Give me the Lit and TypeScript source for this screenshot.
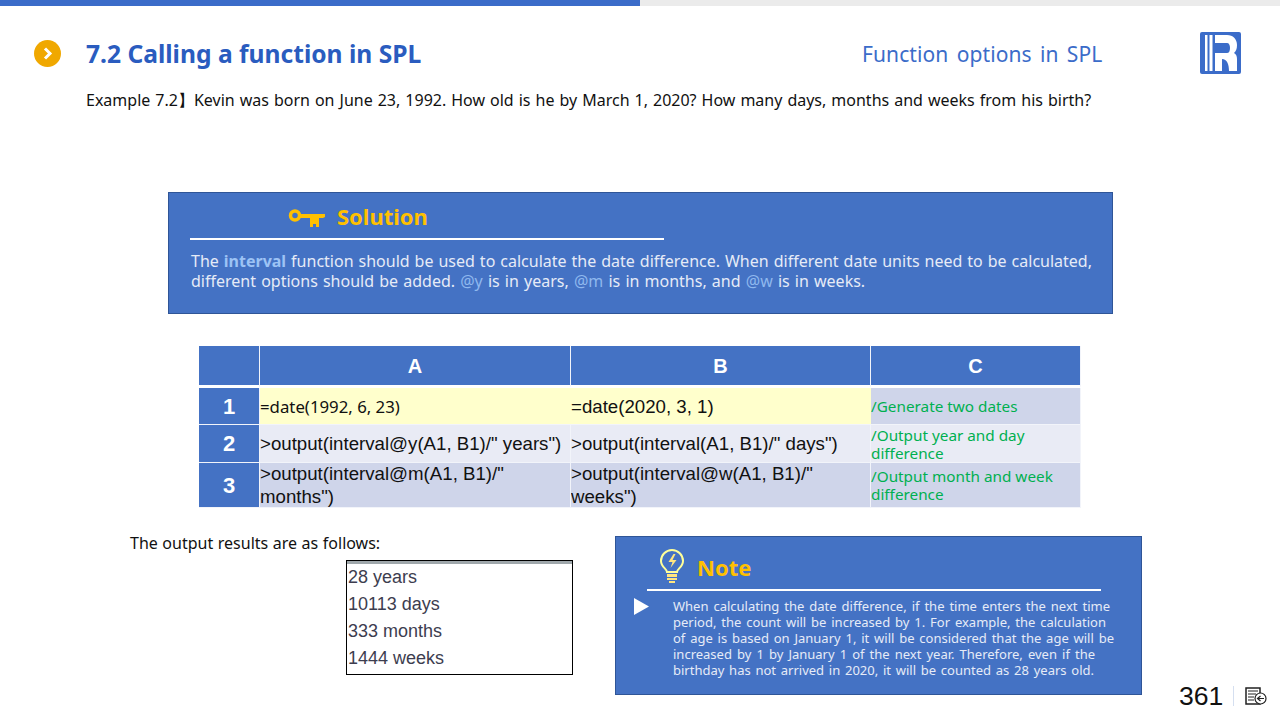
import { LitElement, html, css } from "lit";
import { customElement } from "lit/decorators.js";

const noteLines: [string, number][] = [
  ["When calculating the date difference, if the time enters the next time", 437],
  ["period, the count will be increased by 1. For example, the calculation", 433],
  ["of age is based on January 1, it will be considered that the age will be", 441],
  ["increased by 1 by January 1 of the next year. Therefore, even if the", 422],
  ["birthday has not arrived in 2020, it will be counted as 28 years old.", 421],
];

@customElement("app-root")
export class AppRoot extends LitElement {
  static styles = css`
    :host { display: block; width: 1280px; height: 720px; overflow: hidden; background: #fff; font-family: "Noto Sans", sans-serif; color: #111; }
    .progress { display: flex; height: 6px; background: #ebebeb; }
    .progress div { width: 640px; background: #3b6cc9; }
    .head { display: flex; align-items: center; height: 42px; margin-top: 26px; padding-left: 34px; }
    .bullet { width: 27px; height: 27px; flex: none; }
    .title { margin-left: 25px; width: 776px; font-size: 24.6px; font-weight: 700; color: #2a5cbf; white-space: nowrap; }
    .sub { width: 338px; font-size: 21px; color: #3b6cc9; white-space: nowrap; letter-spacing: 0.1px; word-spacing: 2.7px; padding-top: 1px; }
    .logo { width: 41px; height: 42px; flex: none; }
    .example { margin: 15px 0 0 86px; font-size: 16px; line-height: 22px; white-space: nowrap; word-spacing: 0.86px; }
    .solution { box-sizing: border-box; width: 945px; height: 122px; margin: 81px 0 0 168px; padding: 6px 20px 0 22px; background: #4472c4; border: 1px solid #2f5597; color: #e6ebf7; }
    .sol-head { display: flex; align-items: center; gap: 11px; height: 34px; padding-left: 97px; }
    .sol-head svg { width: 38px; height: 18px; margin-top: 3px; }
    .gold { font-size: 22px; font-weight: 700; color: #ffc000; }
    .rule { height: 2px; background: #fff; width: 474px; margin: 5px 0 11px -1px; }
    .sol-text { font-size: 16px; line-height: 20px; word-spacing: 1px; }
    .jl { text-align: justify; text-align-last: justify; white-space: nowrap; }
    .first { word-spacing: 0.7px; }
    .kw { font-weight: 700; color: #9dc3f5; }
    .opt { color: #8fb8ee; }
    .sheet { display: grid; grid-template-columns: 61px 311px 300px 210px; grid-template-rows: 42px 37px 38px 45px; width: 882px; margin: 32px 0 0 199px; }
    .cell { box-sizing: border-box; display: flex; align-items: center; border-right: 1px solid #f2f4fa; border-bottom: 1px solid #f2f4fa; font-family: "Liberation Sans", Arial, sans-serif; font-size: 18.67px; line-height: 23px; overflow: hidden; }
    .hd { background: #4472c4; color: #fff; font-weight: 700; font-size: 20px; justify-content: center; padding-top: 1px; border-bottom-width: 3px; border-bottom-color: #fff; }
    .sd { background: #4472c4; color: #fff; font-weight: 700; font-size: 22px; justify-content: center; }
    .r1 { background: #ffffcc; border-right: none; }
    .r2 { background: #e9ebf5; }
    .r3 { background: #cfd5ea; }
    .yh { font-family: "Noto Sans", sans-serif; font-size: 16.8px; }
    .cm { font-family: "Noto Sans", sans-serif; font-size: 15.3px; line-height: 18px; color: #00b050; }
    .bottom { display: flex; align-items: flex-start; margin: 24px 0 0 130px; }
    .left { width: 485px; }
    .left p { margin: 0; font-size: 16px; line-height: 22px; white-space: nowrap; word-spacing: 0.4px; }
    .out { box-sizing: border-box; width: 227px; height: 115px; margin: 6px 0 0 216px; border: 1px solid #000; box-shadow: inset 0 3px 0 #a0a8ac; padding: 3px 0 0 1px; font-family: "Liberation Sans", Arial, sans-serif; font-size: 18px; line-height: 27px; color: #3d3d4f; }
    .note { box-sizing: border-box; width: 527px; height: 159px; margin-top: 4px; background: #4472c4; border: 1px solid #2f5597; padding: 12px 0 0 0; color: #e6ebf7; }
    .note-head { display: flex; align-items: center; height: 36px; padding-left: 43px; gap: 12px; }
    .note-head svg { width: 26px; height: 36px; }
    .note-gold { font-size: 22px; font-weight: 700; color: #ffc000; }
    .note-rule { height: 2px; background: #fff; width: 454px; margin: 4px 0 0 31px; }
    .note-body { display: flex; margin-top: 7px; padding-left: 18px; }
    .note-body svg { width: 16px; height: 17px; flex: none; }
    .note-text { margin-left: 23px; font-size: 13px; line-height: 16px; }
    .foot { display: flex; align-items: center; margin: 151px 0 0 37px; flex: none; height: 26px; }
    .num { font-family: "Liberation Sans", Arial, sans-serif; font-size: 26.6px; color: #111; }
    .sep { width: 1px; height: 20px; background: #d5dff0; margin: 0 11px 0 10px; }
    .foot svg { width: 22px; height: 18px; }
  `;

  render() {
    return html`
      <div class="progress"><div></div></div>
      <div class="head">
        <svg class="bullet" viewBox="0 0 27 27"><circle cx="13.5" cy="13.5" r="13.5" fill="#f0a800"/><path d="M11 8.5l5 5-5 5" fill="none" stroke="#fff" stroke-width="3"/></svg>
        <div class="title">7.2 Calling a function in SPL</div>
        <div class="sub">Function options in SPL</div>
        <svg class="logo" viewBox="0 0 41 42">
          <rect width="41" height="42" rx="2" fill="#3b6cc9"/>
          <path d="M5 3h2.500v36H5zM9.500 3h3v36h-3z" fill="#fff"/>
          <path d="M15 3H27C33 3 37 7 37 13C37 17 36 19 34 21C36 22 37 24 37 27V39H29C29 32 27 27 22 27V39H15V21H27C29 21 30 19 30 16C30 13 29 11 27 11H15Z" fill="#fff"/>
        </svg>
      </div>
      <div class="example">Example 7.2】Kevin was born on June 23, 1992. How old is he by March 1, 2020? How many days, months and weeks from his birth?</div>

      <div class="solution">
        <div class="sol-head">
          <svg viewBox="0 0 38 18"><circle cx="7" cy="6.500" r="4.500" fill="none" stroke="#ffc000" stroke-width="3.500"/><path d="M12 5h25v3l-2 1H31v9h-3v-3h-3v3h-3V9H12z" fill="#ffc000"/></svg>
          <span class="gold">Solution</span>
        </div>
        <div class="rule"></div>
        <div class="sol-text">
          <div class="jl first">The <span class="kw">interval</span> function should be used to calculate the date difference. When different date units need to be calculated,</div>
          <div>different options should be added. <span class="opt">@y</span> is in years, <span class="opt">@m</span> is in months, and <span class="opt">@w</span> is in weeks.</div>
        </div>
      </div>

      <div class="sheet">
        <div class="cell hd"></div><div class="cell hd">A</div><div class="cell hd">B</div><div class="cell hd">C</div>
        <div class="cell sd">1</div>
        <div class="cell r1 yh">=date(1992, 6, 23)</div>
        <div class="cell r1">=date(2020, 3, 1)</div>
        <div class="cell r3 cm">/Generate two dates</div>
        <div class="cell sd">2</div>
        <div class="cell r2">&gt;output(interval@y(A1, B1)/" years")</div>
        <div class="cell r2">&gt;output(interval(A1, B1)/" days")</div>
        <div class="cell r2 cm">/Output year and day difference</div>
        <div class="cell sd">3</div>
        <div class="cell r3">&gt;output(interval@m(A1, B1)/"<br />months")</div>
        <div class="cell r3">&gt;output(interval@w(A1, B1)/"<br />weeks")</div>
        <div class="cell r3 cm">/Output month and week difference</div>
      </div>

      <div class="bottom">
        <div class="left">
          <p>The output results are as follows:</p>
          <div class="out">28 years<br />10113 days<br />333 months<br />1444 weeks</div>
        </div>
        <div class="note">
          <div class="note-head">
            <svg viewBox="0 0 26 36">
              <path d="M8 23c0-3-6-5-6-11a11 11 0 0 1 22 0c0 6-6 8-6 11z" fill="none" stroke="#ffff99" stroke-width="2"/>
              <path d="M14.500 5l-5 8h4l-2 6 6-8h-4l3-6z" fill="#ffe680"/>
              <path d="M8 25h10v3H8zM8 29h10v2H8zM10 32h6v2h-6z" fill="#ffe680"/>
            </svg>
            <span class="note-gold">Note</span>
          </div>
          <div class="note-rule"></div>
          <div class="note-body">
            <svg viewBox="0 0 16 17"><path d="M0 0l15 8.500L0 17z" fill="#fff"/></svg>
            <div class="note-text">
              ${noteLines.map(([l, w]) => html`<div class="jl" style="width:${w}px">${l}</div>`)}
            </div>
          </div>
        </div>
        <div class="foot">
          <span class="num">361</span>
          <span class="sep"></span>
          <svg viewBox="0 0 22 18">
            <path d="M1 1h14v16H1z" fill="none" stroke="#222" stroke-width="1.500"/>
            <path d="M3 4h10M3 7h8M3 10h6M3 13h6" stroke="#222" stroke-width="1.200"/>
            <circle cx="15.500" cy="11.500" r="5.500" fill="#fff" stroke="#222" stroke-width="1.200"/>
            <path d="M19 11.500h-6M15.500 9l-3 2.500 3 2.500" fill="none" stroke="#222" stroke-width="1.200"/>
          </svg>
        </div>
      </div>
    `;
  }
}
